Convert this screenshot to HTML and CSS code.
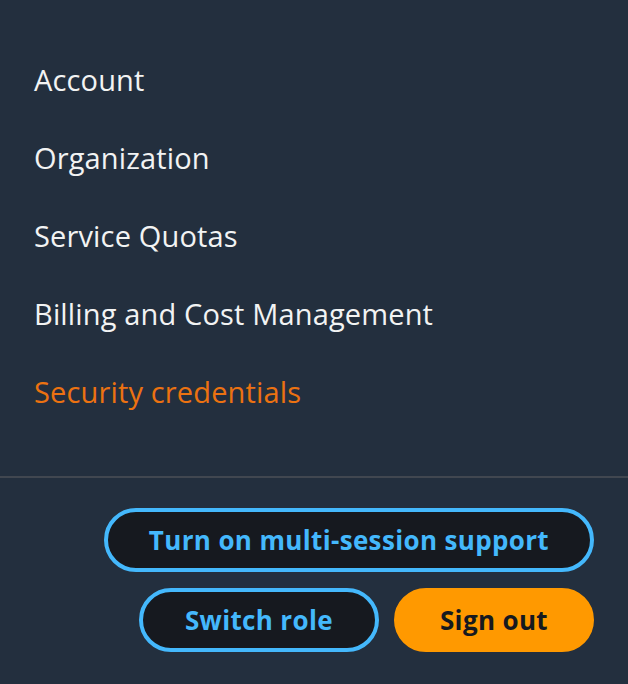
FILE: index.html
```html
<!DOCTYPE html>
<html>
<head>
<meta charset="utf-8">
<link rel="stylesheet" href="styles.css">
</head>
<body>
<div class="panel">
  <ul class="menu">
    <li class="item">Account</li>
    <li class="item">Organization</li>
    <li class="item">Service Quotas</li>
    <li class="item">Billing and Cost Management</li>
    <li class="item active">Security credentials</li>
  </ul>
  <div class="divider"></div>
  <div class="actions">
    <div class="row"><button class="btn outline">Turn on multi-session support</button></div>
    <div class="row">
      <button class="btn outline">Switch role</button>
      <button class="btn primary">Sign out</button>
    </div>
  </div>
</div>
</body>
</html>
```
FILE: styles.css
```css
html, body {
  margin: 0;
  padding: 0;
  background: #232f3e;
  height: 100%;
}
body {
  font-family: "Open Sans", "Noto Sans", sans-serif;
}
.panel {
  width: 628px;
  height: 684px;
  background: #232f3e;
}
.menu {
  list-style: none;
  margin: 0;
  padding: 41px 0 0 0;
}
.item {
  height: 78px;
  line-height: 78px;
  padding-left: 34px;
  font-size: 29px;
  letter-spacing: 0.15px;
  color: #f2f3f3;
}
.item.active {
  color: #ec7211;
}
.divider {
  margin-top: 45px;
  height: 2px;
  background: #414750;
}
.actions {
  display: flex;
  flex-direction: column;
  align-items: flex-end;
  gap: 16px;
  padding: 30px 34px 0 0;
}
.row {
  display: flex;
  gap: 15px;
}
.btn {
  height: 64px;
  box-sizing: border-box;
  border-radius: 32px;
  border: 4px solid #44b8fc;
  background: #16191f;
  color: #44b8fc;
  font-family: inherit;
  font-size: 26px;
  font-weight: 700;
  letter-spacing: 0.35px;
  padding: 0 41px;
}
.btn.outline:first-child:not(:only-child) {
  padding: 0 42px;
}
.btn.primary {
  background: #ff9900;
  border-color: #ff9900;
  color: #16191f;
  padding: 0 42px;
}
```
